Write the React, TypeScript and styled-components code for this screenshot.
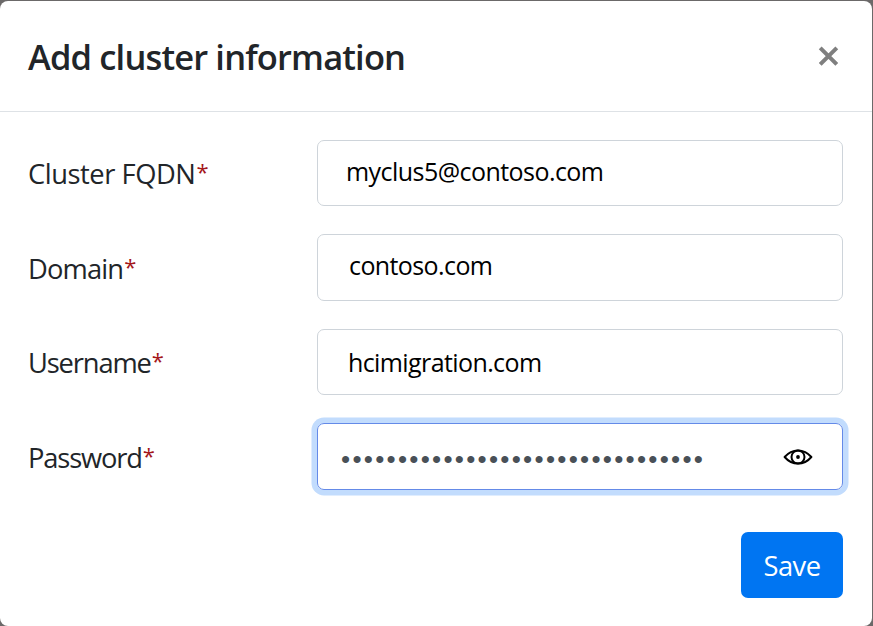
import React from "react";
import styled, { createGlobalStyle } from "styled-components";

const GlobalStyle = createGlobalStyle`
  * { box-sizing: border-box; }
  body {
    margin: 0;
    background: #6b6b6b;
    font-family: "Open Sans", "Noto Sans", sans-serif;
    color: #212529;
  }
`;

const Backdrop = styled.div`
  height: 626px;
  padding: 1px 1px 0 0;
  background: #6b6969;
  overflow: hidden;
`;

const Dialog = styled.section`
  height: 625px;
  background: #fff;
  border-radius: 8px;
  overflow: hidden;
`;

const Header = styled.header`
  display: flex;
  align-items: center;
  justify-content: space-between;
  height: 111px;
  padding: 0 33px 0 28px;
  border-bottom: 1px solid #dee2e6;
`;

const Title = styled.h1`
  margin: 2px 0 0;
  font-size: 34.5px;
  line-height: 42px;
  font-weight: 600;
  letter-spacing: -0.85px;
  white-space: nowrap;
`;

const CloseButton = styled.button`
  display: flex;
  padding: 0;
  border: 0;
  background: none;
`;

const Form = styled.form`
  display: flex;
  flex-direction: column;
  gap: 28.4px;
  padding: 28px 29px 0 28px;
`;

const Row = styled.div`
  display: grid;
  grid-template-columns: 289px 1fr;
  align-items: center;
  height: 66px;
`;

const Label = styled.label<{ $tracking: number }>`
  display: flex;
  padding-top: 2px;
  font-size: 27.3px;
  line-height: 42px;
  letter-spacing: ${(p) => p.$tracking}px;
  white-space: nowrap;
`;

const Required = styled.span`
  margin: -3px 0 3px 1px;
  font-size: 22px;
  color: #a4161a;
  letter-spacing: 0;
`;

const Field = styled.div<{ $focused?: boolean; $height?: number; $indent: number; $lift: number }>`
  display: flex;
  align-items: center;
  justify-content: space-between;
  height: ${(p) => p.$height ?? 66}px;
  padding: 0 29px ${(p) => p.$lift}px ${(p) => p.$indent}px;
  border: 1px solid ${(p) => (p.$focused ? "#648ae8" : "#ced4da")};
  border-radius: 7px;
  box-shadow: ${(p) => (p.$focused ? "0 0 0 5.5px #c2dcfd" : "none")};
`;

const Value = styled.span<{ $tracking: number }>`
  font-size: 25px;
  line-height: 36px;
  color: #000;
  letter-spacing: ${(p) => p.$tracking}px;
  white-space: nowrap;
`;

const Mask = styled.span`
  padding-top: 4px;
  font-family: "Liberation Sans", sans-serif;
  font-size: 26px;
  line-height: 36px;
  color: #495057;
  letter-spacing: 2.28px;
  white-space: nowrap;
`;

const Footer = styled.footer`
  display: flex;
  justify-content: flex-end;
  padding: 43px 29px 0 0;
`;

const SaveButton = styled.button`
  width: 102px;
  height: 66px;
  padding: 2px 0 0;
  border: 0;
  border-radius: 7px;
  background: #0075f2;
  color: #fff;
  font-family: inherit;
  font-size: 27.3px;
  line-height: 42px;
  letter-spacing: -0.5px;
`;

const CloseIcon = () => (
  <svg width="21" height="21" viewBox="0 0 21 21" stroke="#7f7f7f" strokeWidth="4">
    <path d="M2.2 1.8 18.8 18.400M18.800 1.800 2.200 18.400" />
  </svg>
);

const EyeIcon = () => (
  <svg width="30" height="18" viewBox="0 0 30 18" fill="none" stroke="#000" strokeWidth="2">
    <path d="M1.6 9C5.4 4.6 9.5 2.4 15 2.4s9.6 2.2 13.4 6.6C24.6 13.4 20.5 15.6 15 15.6S5.4 13.4 1.6 9Z" strokeLinejoin="round" />
    <circle cx="15" cy="9" r="6.5" />
    <circle cx="15" cy="9" r="1.9" fill="#000" stroke="none" />
  </svg>
);

const fields = [
  { label: "Cluster FQDN", value: "myclus5@contoso.com", labelTracking: -0.45, tracking: -0.55, indent: 28, lift: 4, height: 66 },
  { label: "Domain", value: "contoso.com", labelTracking: -0.85, tracking: -0.6, indent: 31, lift: 5, height: 67 },
  { label: "Username", value: "hcimigration.com", labelTracking: -1.15, tracking: -0.6, indent: 30, lift: 0, height: 66 },
];

export default function App() {
  return (
    <>
      <GlobalStyle />
      <Backdrop>
        <Dialog role="dialog" aria-label="Add cluster information">
          <Header>
            <Title>Add cluster information</Title>
            <CloseButton aria-label="Close">
              <CloseIcon />
            </CloseButton>
          </Header>
          <Form>
            {fields.map((f) => (
              <Row key={f.label}>
                <Label $tracking={f.labelTracking}>
                  {f.label}
                  <Required>*</Required>
                </Label>
                <Field $indent={f.indent} $lift={f.lift} $height={f.height}>
                  <Value $tracking={f.tracking}>{f.value}</Value>
                </Field>
              </Row>
            ))}
            <Row>
              <Label $tracking={-1.15}>
                Password
                <Required>*</Required>
              </Label>
              <Field $focused $indent={23} $lift={0} $height={67}>
                <Mask>{"•".repeat(32)}</Mask>
                <EyeIcon />
              </Field>
            </Row>
          </Form>
          <Footer>
            <SaveButton>Save</SaveButton>
          </Footer>
        </Dialog>
      </Backdrop>
    </>
  );
}
